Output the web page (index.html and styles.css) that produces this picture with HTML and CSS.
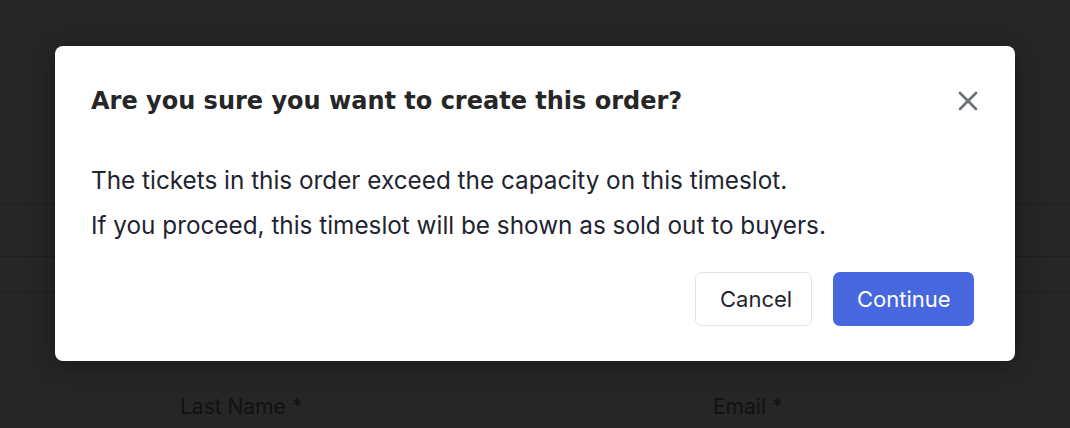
FILE: index.html
```html
<!DOCTYPE html>
<html lang="en">
<head>
<meta charset="utf-8">
<title>Create order</title>
<link rel="stylesheet" href="styles.css">
</head>
<body>
<div class="page">
  <div class="table">
    <div class="row row-a"></div>
    <div class="row row-b"></div>
    <div class="row row-c"></div>
  </div>
  <div class="fields">
    <label class="field-label">Last Name *</label>
    <label class="field-label">Email *</label>
  </div>
</div>

<div class="modal" role="dialog" aria-labelledby="modal-title">
  <div class="modal-header">
    <h2 id="modal-title" class="modal-title">Are you sure you want to create this order?</h2>
    <button class="close-btn" aria-label="Close">
      <svg width="20" height="20" viewBox="0 0 20 20" aria-hidden="true">
        <path d="M2 2 L18 18 M18 2 L2 18" stroke="#6b7079" stroke-width="2.7" stroke-linecap="round" fill="none"/>
      </svg>
    </button>
  </div>
  <div class="modal-body">
    <p>The tickets in this order exceed the capacity on this timeslot.</p>
    <p>If you proceed, this timeslot will be shown as sold out to buyers.</p>
  </div>
  <div class="modal-footer">
    <button class="btn btn-secondary">Cancel</button>
    <button class="btn btn-primary">Continue</button>
  </div>
</div>
</body>
</html>
```
FILE: styles.css
```css
html, body {
  margin: 0;
  padding: 0;
}
body {
  background: #262626;
  width: 1070px;
  height: 428px;
  overflow: hidden;
  position: relative;
  font-family: Inter, "Noto Sans", sans-serif;
}

/* underlying page (dimmed) */
.page {
  display: flex;
  flex-direction: column;
}
.table {
  padding-top: 203px;
  display: flex;
  flex-direction: column;
}
.row {
  border-top: 1px solid #1f1f1f;
}
.row-a { height: 52px; }
.row-b { height: 35px; }
.row-c { height: 0; }
.fields {
  display: grid;
  grid-template-columns: 533px 1fr;
  padding-left: 180px;
  padding-top: 99px;
}
.field-label {
  color: #121212;
  font-size: 21px;
  line-height: 30px;
}

/* modal */
.modal {
  position: absolute;
  top: 46px;
  left: 55px;
  width: 960px;
  box-sizing: border-box;
  padding: 40px 41px 35px 36px;
  background: #ffffff;
  border-radius: 8px;
  box-shadow: 0 4px 24px rgba(0, 0, 0, 0.35);
  display: flex;
  flex-direction: column;
}
.modal-header {
  display: flex;
  align-items: center;
  justify-content: space-between;
}
.modal-title {
  margin: 0;
  font-family: "DejaVu Sans", sans-serif;
  font-weight: bold;
  font-size: 24px;
  line-height: 30px;
  color: #262626;
}
.close-btn {
  border: 0;
  background: none;
  padding: 0;
  width: 20px;
  height: 20px;
  margin-right: -4px;
  display: flex;
}
.modal-body {
  padding-top: 49px;
  display: flex;
  flex-direction: column;
  gap: 15px;
}
.modal-body p {
  margin: 0;
  font-size: 24.3px;
  line-height: 30px;
  color: #1e2430;
}
.modal-footer {
  padding-top: 32px;
  display: flex;
  justify-content: flex-end;
  gap: 21px;
}
.btn {
  height: 54px;
  box-sizing: border-box;
  border-radius: 7px;
  font-family: Inter, "Noto Sans", sans-serif;
  font-size: 22px;
  padding: 0 24px;
}
.btn-secondary {
  background: #ffffff;
  border: 1.5px solid #e3e3e3;
  color: #1e2430;
  width: 117px;
}
.btn-primary {
  background: #4767de;
  border: 0;
  color: #ffffff;
  width: 141px;
}
```
